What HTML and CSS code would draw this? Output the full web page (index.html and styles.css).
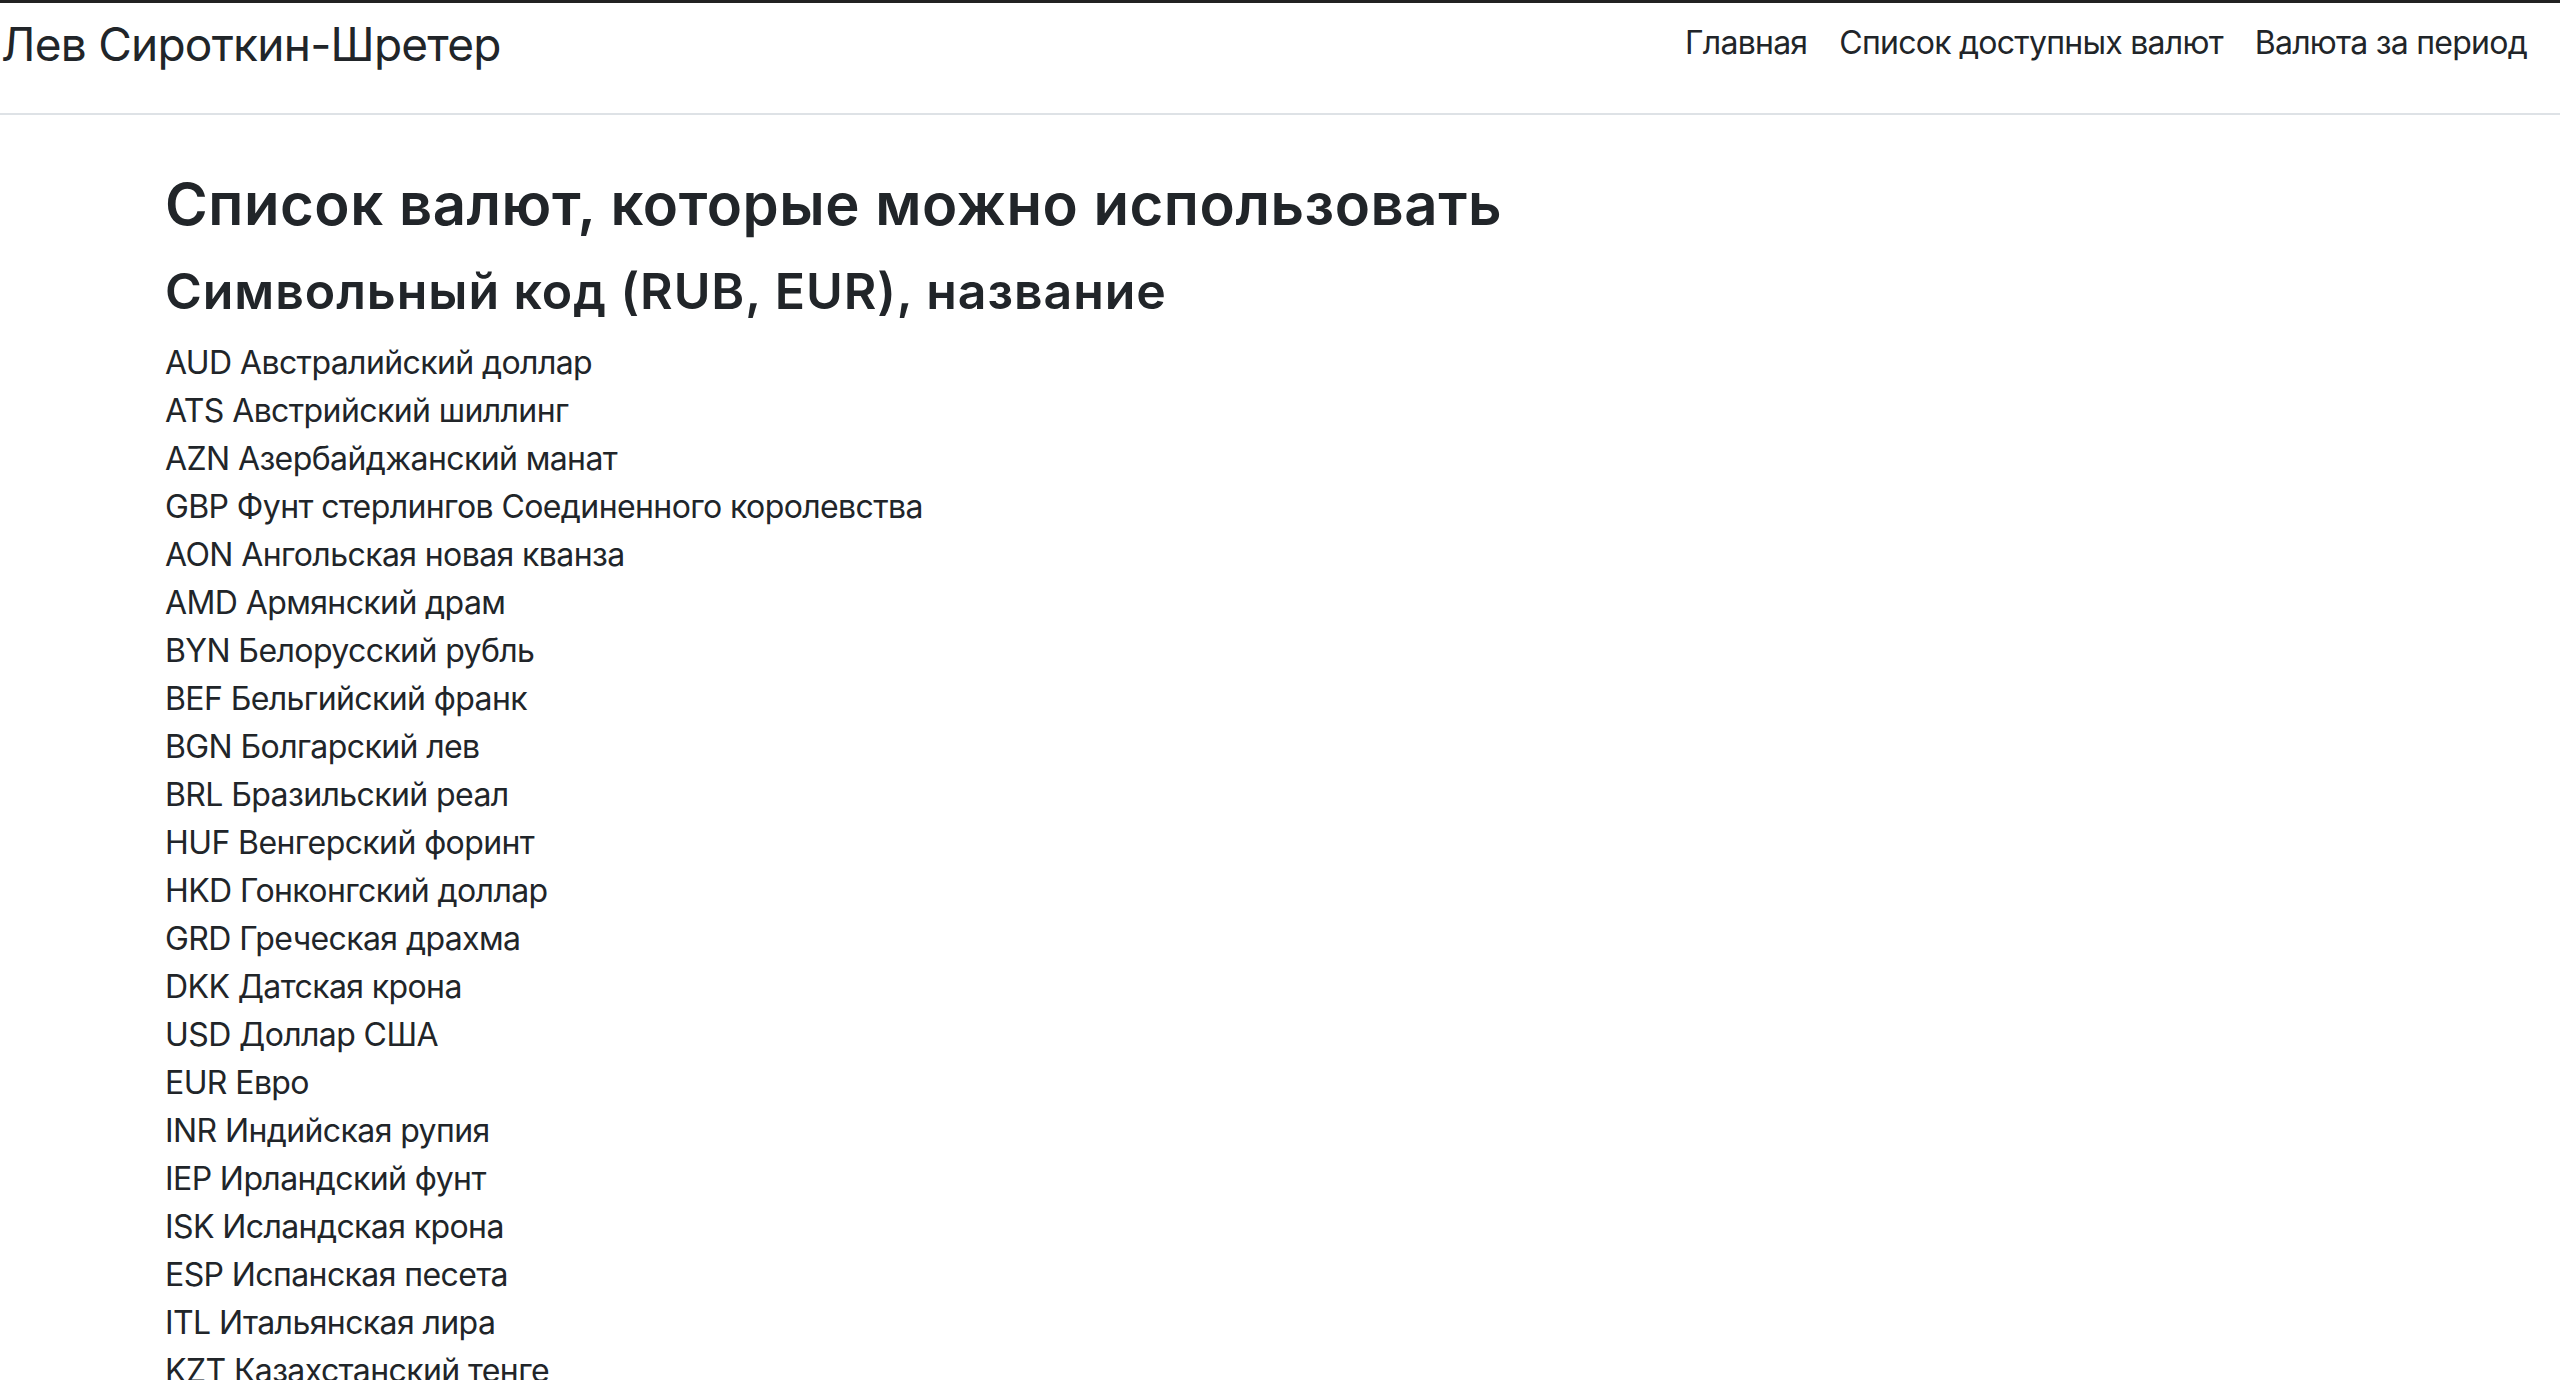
FILE: index.html
```html
<!DOCTYPE html>
<html lang="ru">
<head>
<meta charset="utf-8">
<title>Список доступных валют</title>
<link rel="stylesheet" href="styles.css">
</head>
<body>
<header class="navbar">
  <a class="brand" href="#">Лев Сироткин-Шретер</a>
  <nav class="nav">
    <a class="nav-link" href="#">Главная</a>
    <a class="nav-link" href="#">Список доступных валют</a>
    <a class="nav-link" href="#">Валюта за период</a>
  </nav>
</header>
<main class="container">
  <h3 class="title">Список валют, которые можно использовать</h3>
  <h4 class="subtitle">Символьный код (RUB, EUR), название</h4>
  <div class="list">
    <div class="item">AUD Австралийский доллар</div>
    <div class="item">ATS Австрийский шиллинг</div>
    <div class="item">AZN Азербайджанский манат</div>
    <div class="item">GBP Фунт стерлингов Соединенного королевства</div>
    <div class="item">AON Ангольская новая кванза</div>
    <div class="item">AMD Армянский драм</div>
    <div class="item">BYN Белорусский рубль</div>
    <div class="item">BEF Бельгийский франк</div>
    <div class="item">BGN Болгарский лев</div>
    <div class="item">BRL Бразильский реал</div>
    <div class="item">HUF Венгерский форинт</div>
    <div class="item">HKD Гонконгский доллар</div>
    <div class="item">GRD Греческая драхма</div>
    <div class="item">DKK Датская крона</div>
    <div class="item">USD Доллар США</div>
    <div class="item">EUR Евро</div>
    <div class="item">INR Индийская рупия</div>
    <div class="item">IEP Ирландский фунт</div>
    <div class="item">ISK Исландская крона</div>
    <div class="item">ESP Испанская песета</div>
    <div class="item">ITL Итальянская лира</div>
    <div class="item">KZT Казахстанский тенге</div>
    <div class="item">CAD Канадский доллар</div>
    <div class="item">KGS Киргизский сом</div>
    <div class="item">CNY Китайский юань</div>
  </div>
</main>
</body>
</html>
```
FILE: styles.css
```css
html, body {
  margin: 0;
  padding: 0;
  background: #fff;
}
body {
  font-family: Inter, "Noto Sans", sans-serif;
  color: #212529;
  font-size: 32px;
  line-height: 48px;
  letter-spacing: -0.6px;
}
a {
  color: #212529;
  text-decoration: none;
}
.navbar {
  display: flex;
  justify-content: space-between;
  align-items: flex-start;
  box-sizing: border-box;
  height: 115px;
  padding: 5px 17px 0 0;
  border-top: 3px solid #222;
  border-bottom: 2px solid #dee2e6;
}
.brand {
  font-size: 46px;
  line-height: 72px;
  letter-spacing: -0.75px;
  padding-left: 1px;
}
.nav {
  display: flex;
  margin-top: 11px;
}
.nav-link {
  padding: 0 16px;
  letter-spacing: -0.75px;
}
.container {
  padding: 56px 0 0 165px;
}
.title {
  margin: 0 0 24px;
  font-size: 58px;
  line-height: 67px;
  font-weight: 600;
  letter-spacing: 0.55px;
}
.subtitle {
  margin: 0 0 19px;
  font-size: 50px;
  line-height: 58px;
  font-weight: 600;
  letter-spacing: 0.95px;
}
.item {
  white-space: nowrap;
}
```
